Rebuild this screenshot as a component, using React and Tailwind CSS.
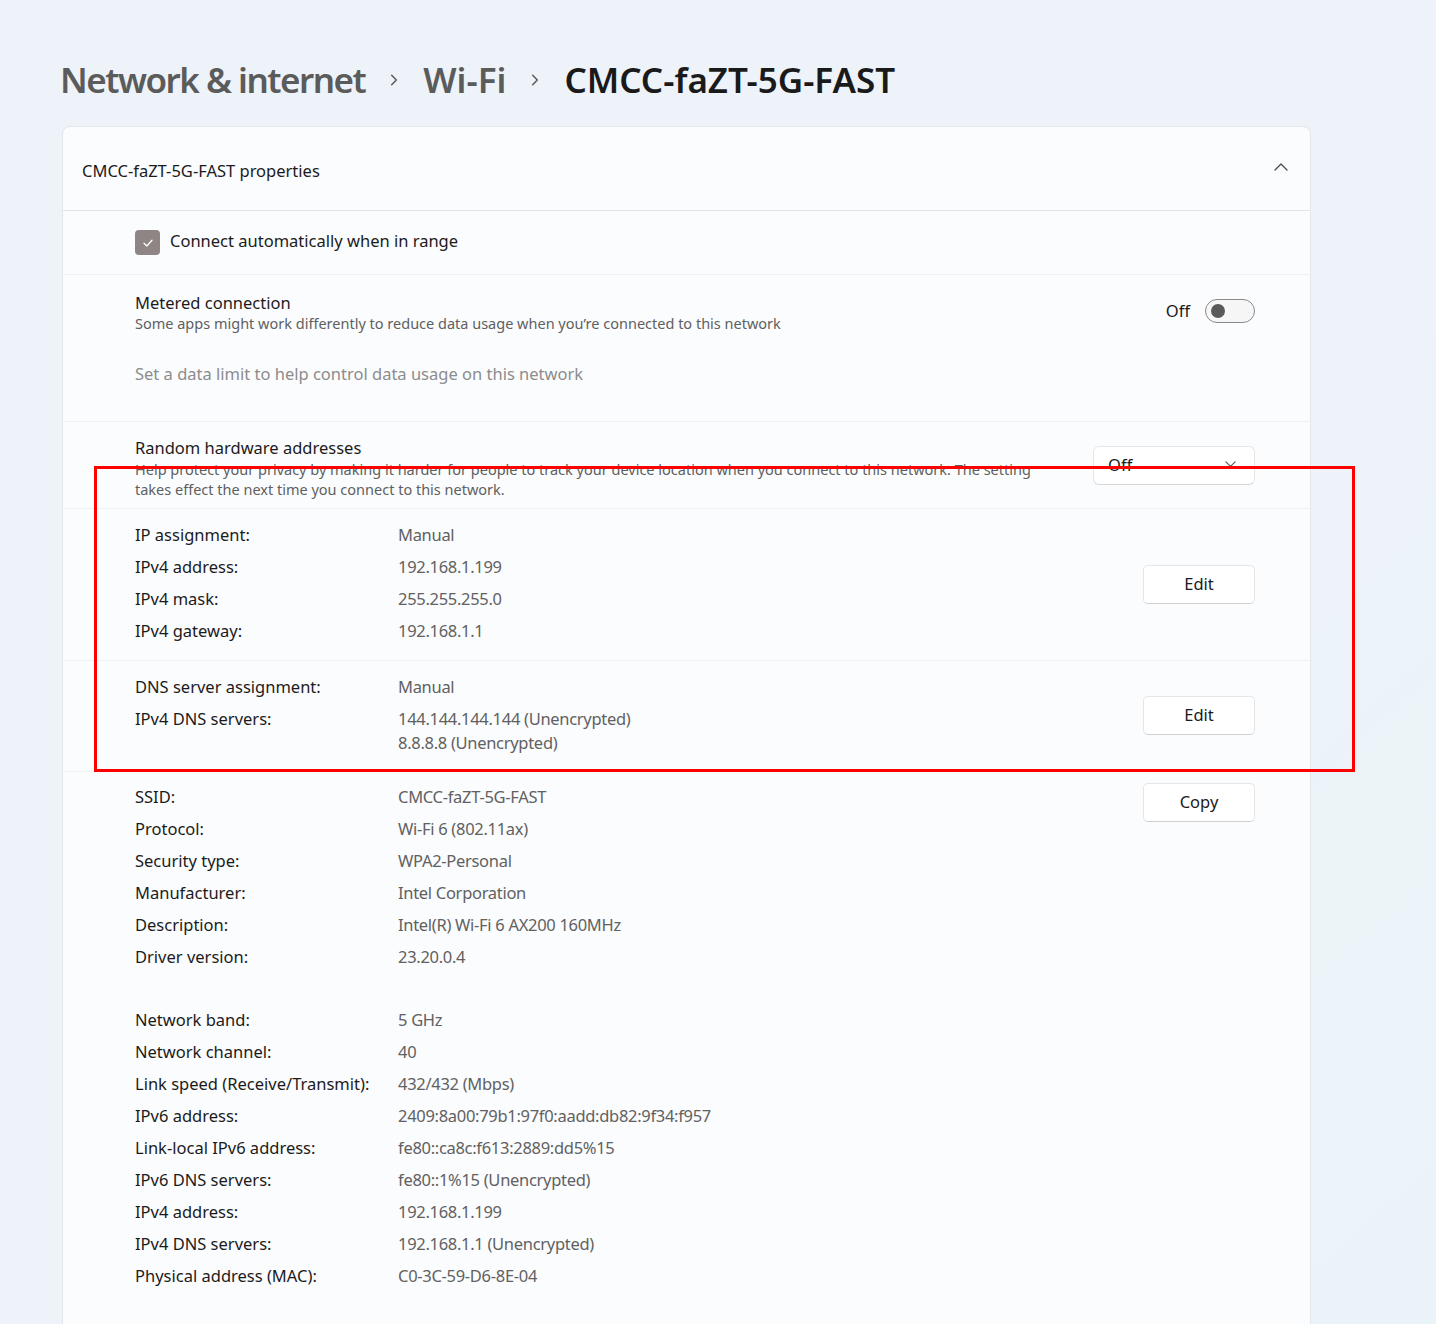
import React from "react";

const FONT = { fontFamily: '"Noto Sans", "Open Sans", sans-serif' };

function Chevron({ dir = "right", className = "" }) {
  const d =
    dir === "right"
      ? "M4 2 L8 6 L4 10"
      : dir === "up"
      ? "M1 8 L7 2 L13 8"
      : "M1 2 L6 7 L11 2";
  const vb = dir === "up" ? "0 0 14 10" : "0 0 12 12";
  return (
    <svg viewBox={vb} className={className} fill="none" stroke="currentColor" strokeWidth="1.3" strokeLinecap="round" strokeLinejoin="round">
      <path d={d} />
    </svg>
  );
}

function Btn({ children }) {
  return (
    <div className="w-[112px] h-[39px] flex items-center justify-center rounded-[5px] bg-white border border-[#e6e6e6] border-b-[#d0d0d0] text-[16.5px] text-[#1b1b1b]">
      {children}
    </div>
  );
}

function KV({ k, v }) {
  return (
    <div className="flex leading-[32px] text-[16.5px]">
      <div className="w-[263px] text-[#1b1b1b]">{k}</div>
      <div className="text-[#616161] tracking-[-0.3px]">{v}</div>
    </div>
  );
}

export default function App() {
  return (
    <div className="min-h-[1324px] w-full bg-gradient-to-br from-[#eef2f9] via-[#eef3f9] to-[#eaf4f8] pl-[60px] pt-[56px] relative overflow-hidden" style={FONT}>
      {/* Breadcrumb */}
      <div className="flex items-center h-[48px] text-[35px] font-semibold">
        <span className="text-[#5b5b5b] tracking-[-1.5px]">Network &amp; internet</span>
        <Chevron className="w-[14px] h-[14px] mx-[22px] text-[#5b5b5b]" />
        <span className="text-[#5b5b5b]">Wi-Fi</span>
        <Chevron className="w-[14px] h-[14px] mx-[22px] text-[#5b5b5b]" />
        <span className="text-[#1a1a1a]">CMCC-faZT-5G-FAST</span>
      </div>

      {/* Card */}
      <div className="mt-[22px] ml-[2px] w-[1249px] rounded-t-[8px] border border-[#e3e6ea] bg-[#fbfcfe] pb-[40px]">
        {/* header */}
        <div className="h-[84px] flex items-center justify-between pl-[19px] pr-[22px] pt-[5px] border-b border-[#e3e5e8]">
          <span className="text-[16.5px] text-[#1b1b1b]">CMCC-faZT-5G-FAST properties</span>
          <Chevron dir="up" className="w-[14px] h-[10px] text-[#4a4a4a] -mt-[9px]" />
        </div>

        {/* checkbox row */}
        <div className="h-[64px] flex items-center pl-[72px] border-b border-[#eef0f2]">
          <div className="w-[25px] h-[25px] rounded-[4px] bg-[#8f8585] flex items-center justify-center">
            <svg viewBox="0 0 12 12" className="w-[12px] h-[12px]" fill="none" stroke="white" strokeWidth="1.3" strokeLinecap="round" strokeLinejoin="round">
              <path d="M2 6.3 L4.8 9 L10 3.3" />
            </svg>
          </div>
          <span className="ml-[10px] text-[16.5px] text-[#1b1b1b] -mt-[2px]">Connect automatically when in range</span>
        </div>

        {/* metered */}
        <div className="pl-[72px] pr-[55px] pt-[16px] pb-[35px] border-b border-[#eef0f2]">
          <div className="flex justify-between items-start">
            <div>
              <div className="text-[16.5px] leading-[24px] text-[#1b1b1b]">Metered connection</div>
              <div className="text-[14.5px] leading-[18px] text-[#5f5f5f] -mt-[1px]">Some apps might work differently to reduce data usage when you’re connected to this network</div>
            </div>
            <div className="flex items-center mt-[8px]">
              <span className="text-[16.5px] text-[#1b1b1b] mr-[15px]">Off</span>
              <div className="w-[50px] h-[24px] rounded-full border border-[#8a8a8a] bg-[#f6f6f6] flex items-center pl-[5px]">
                <div className="w-[14px] h-[14px] rounded-full bg-[#5a5a5a]" />
              </div>
            </div>
          </div>
          <div className="mt-[30px] text-[16.5px] leading-[24px] text-[#8c8c8c]">Set a data limit to help control data usage on this network</div>
        </div>

        {/* random hw */}
        <div className="pl-[72px] pr-[55px] pt-[14px] pb-[9px] border-b border-[#eef0f2] flex justify-between items-start">
          <div className="w-[920px]">
            <div className="text-[16.5px] leading-[24px] text-[#1b1b1b]">Random hardware addresses</div>
            <div className="text-[14.5px] leading-[20px] text-[#5f5f5f] -mt-[1px]">Help protect your privacy by making it harder for people to track your device location when you connect to this network. The setting takes effect the next time you connect to this network.</div>
          </div>
          <div className="mt-[10px] w-[162px] h-[39px] rounded-[6px] bg-white border border-[#e6e6e6] border-b-[#d6d6d6] flex items-center justify-between pl-[14px] pr-[18px]">
            <span className="text-[16.5px] text-[#1b1b1b]">Off</span>
            <Chevron dir="down" className="w-[11px] h-[11px] text-[#5a5a5a]" />
          </div>
        </div>

        {/* IP */}
        <div className="pl-[72px] pr-[55px] pt-[10px] pb-[13px] border-b border-[#eef0f2] flex justify-between items-start">
          <div>
            <KV k="IP assignment:" v="Manual" />
            <KV k="IPv4 address:" v="192.168.1.199" />
            <KV k="IPv4 mask:" v="255.255.255.0" />
            <KV k="IPv4 gateway:" v="192.168.1.1" />
          </div>
          <div className="mt-[46px]">
            <Btn>Edit</Btn>
          </div>
        </div>

        {/* DNS */}
        <div className="pl-[72px] pr-[55px] pt-[10px] pb-[12px] border-b border-[#eef0f2] flex justify-between items-start">
          <div>
            <KV k="DNS server assignment:" v="Manual" />
            <div className="flex leading-[24px] text-[16.5px] py-[4px]">
              <div className="w-[263px] text-[#1b1b1b]">IPv4 DNS servers:</div>
              <div className="text-[#616161] tracking-[-0.3px]">
                <div>144.144.144.144 (Unencrypted)</div>
                <div>8.8.8.8 (Unencrypted)</div>
              </div>
            </div>
          </div>
          <div className="mt-[25px]">
            <Btn>Edit</Btn>
          </div>
        </div>

        {/* details */}
        <div className="pl-[72px] pr-[55px] pt-[9px] flex justify-between items-start">
          <div>
            <KV k="SSID:" v="CMCC-faZT-5G-FAST" />
            <KV k="Protocol:" v="Wi-Fi 6 (802.11ax)" />
            <KV k="Security type:" v="WPA2-Personal" />
            <KV k="Manufacturer:" v="Intel Corporation" />
            <KV k="Description:" v="Intel(R) Wi-Fi 6 AX200 160MHz" />
            <KV k="Driver version:" v="23.20.0.4" />
            <div className="h-[31px]" />
            <KV k="Network band:" v="5 GHz" />
            <KV k="Network channel:" v="40" />
            <KV k="Link speed (Receive/Transmit):" v="432/432 (Mbps)" />
            <KV k="IPv6 address:" v="2409:8a00:79b1:97f0:aadd:db82:9f34:f957" />
            <KV k="Link-local IPv6 address:" v="fe80::ca8c:f613:2889:dd5%15" />
            <KV k="IPv6 DNS servers:" v="fe80::1%15 (Unencrypted)" />
            <KV k="IPv4 address:" v="192.168.1.199" />
            <KV k="IPv4 DNS servers:" v="192.168.1.1 (Unencrypted)" />
            <KV k="Physical address (MAC):" v="C0-3C-59-D6-8E-04" />
          </div>
          <div className="mt-[2px]">
            <Btn>Copy</Btn>
          </div>
        </div>
      </div>

      {/* red annotation box */}
      <div className="absolute left-[94px] top-[466px] w-[1261px] h-[306px] border-[3px] border-[#ff0000] pointer-events-none" />
    </div>
  );
}
